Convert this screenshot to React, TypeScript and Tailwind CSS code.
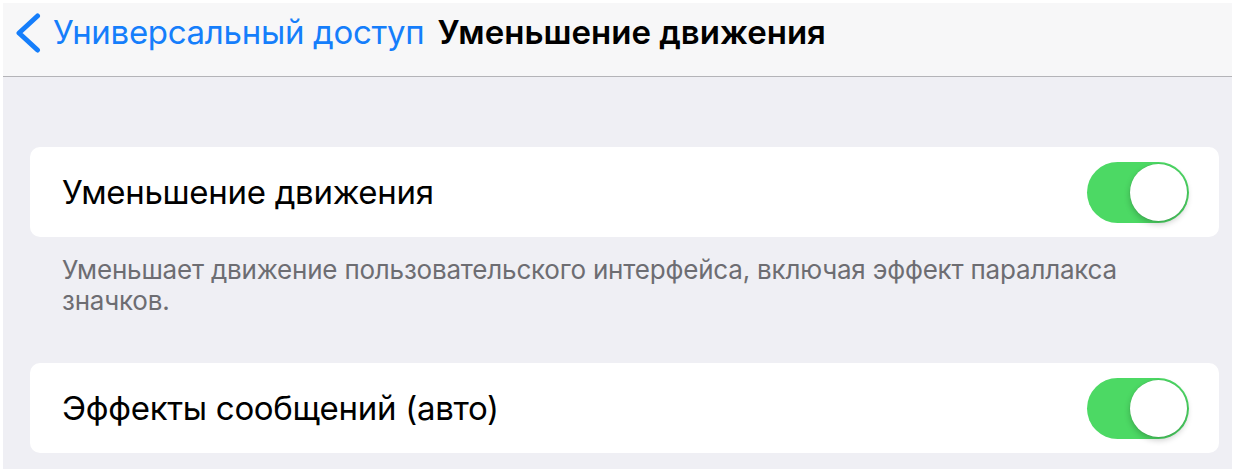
import React from "react";

function Toggle() {
  return (
    <div className="relative h-[61px] w-[102px] shrink-0 rounded-full bg-[#4cd964]">
      <div className="absolute right-[2px] top-[2px] h-[57px] w-[57px] rounded-full bg-white shadow-[0_3px_6px_rgba(0,0,0,0.22),0_0_0_0.5px_rgba(0,0,0,0.08)]" />
    </div>
  );
}

function Row({ label }: { label: string }) {
  return (
    <div className="flex h-[90px] items-center justify-between rounded-[10px] bg-white pl-[32px] pr-[30px]">
      <span className="text-[33px] leading-none tracking-[-0.3px] text-black">{label}</span>
      <Toggle />
    </div>
  );
}

export default function App() {
  return (
    <div
      className="h-[474px] w-[1236px] overflow-hidden bg-white pb-[5px] pl-[3px] pr-[4px] pt-[3px]"
      style={{ fontFamily: "Inter, 'Noto Sans', sans-serif" }}
    >
      <div className="flex h-full flex-col bg-[#efeff4]">
        <header className="flex h-[74px] shrink-0 items-center border-b border-[#b4b4b8] bg-[#f7f7f8] pb-[14px]">
          <svg width="27" height="40" viewBox="0 0 27 40" className="ml-[11px]">
            <path d="M23.5 3 L5 20 L23.5 37" fill="none" stroke="#157efb" strokeWidth="5" strokeLinecap="round" strokeLinejoin="round" />
          </svg>
          <span className="ml-[12px] text-[33px] leading-none tracking-[-0.3px] text-[#157efb]">Универсальный доступ</span>
          <span className="ml-[13px] text-[33px] font-semibold leading-none text-black">Уменьшение движения</span>
        </header>
        <div className="pl-[27px] pr-[13px] pt-[70px]">
          <Row label="Уменьшение движения" />
          <p className="px-[32px] pt-[17px] text-[26px] leading-[31px] tracking-[-0.2px] text-[#6d6d72]">
            Уменьшает движение пользовательского интерфейса, включая эффект параллакса значков.
          </p>
          <div className="pt-[47px]">
            <Row label="Эффекты сообщений (авто)" />
          </div>
        </div>
      </div>
    </div>
  );
}
